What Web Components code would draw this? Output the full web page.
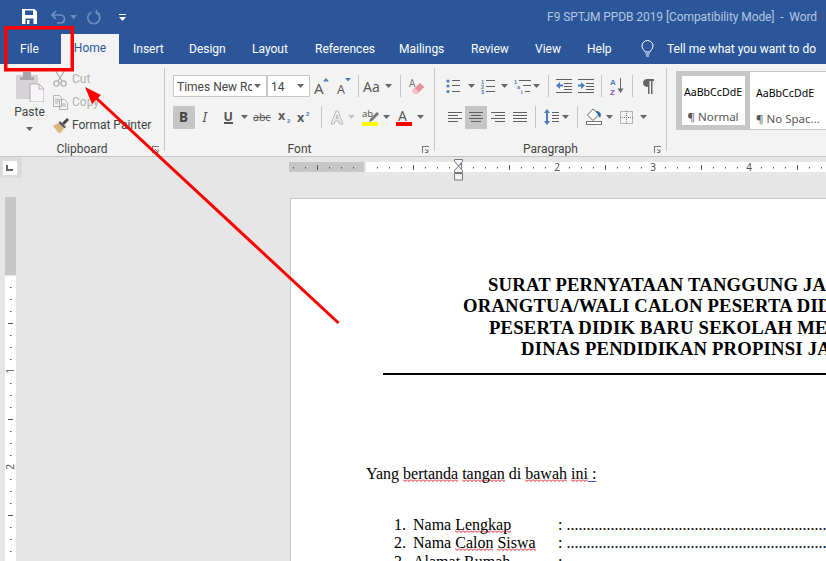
<!DOCTYPE html>
<html>
<head>
<meta charset="utf-8">
<title>Word</title>
<style>
  html, body { margin: 0; padding: 0; background: #e6e6e6; }
</style>
</head>
<body>
<word-window>
  <title-bar slot="top" caption="F9 SPTJM PPDB 2019 [Compatibility Mode]  -  Word"></title-bar>
  <ribbon-tabs slot="top"></ribbon-tabs>
  <word-ribbon slot="top">
    <ribbon-group label="Clipboard" w="165" launcher>
      <clip-board></clip-board>
    </ribbon-group>
    <ribbon-group label="Font" w="270" pad="8" launcher>
      <rb-row>
        <rb-select text="Times New Ro" w="94"></rb-select>
        <rb-select text="14" w="43"></rb-select>
        <rb-gap w="1"></rb-gap>
        <rb-btn icon="grow" w="22"></rb-btn>
        <rb-btn icon="shrink" w="21"></rb-btn>
        <rb-sep l="4" r="4"></rb-sep>
        <rb-btn icon="case" w="20"></rb-btn>
        <rb-btn icon="caret" w="10"></rb-btn>
        <rb-sep l="7" r="6"></rb-sep>
        <rb-btn icon="eraser" w="20"></rb-btn>
      </rb-row>
      <rb-row>
        <rb-btn icon="bold" w="22" active></rb-btn>
        <rb-btn icon="italic" w="22"></rb-btn>
        <rb-btn icon="underline" w="22"></rb-btn>
        <rb-btn icon="caret" w="10"></rb-btn>
        <rb-btn icon="strike" w="26"></rb-btn>
        <rb-btn icon="sub" w="19"></rb-btn>
        <rb-btn icon="sup" w="20"></rb-btn>
        <rb-sep l="7" r="6"></rb-sep>
        <rb-btn icon="effect" w="18"></rb-btn>
        <rb-btn icon="caretdim" w="10"></rb-btn>
        <rb-gap w="5"></rb-gap>
        <rb-btn icon="highlight" w="18"></rb-btn>
        <rb-btn icon="caret" w="14"></rb-btn>
        <rb-btn icon="fontcolor" w="22"></rb-btn>
        <rb-btn icon="caret" w="10"></rb-btn>
      </rb-row>
    </ribbon-group>
    <ribbon-group label="Paragraph" w="232" pad="9" launcher>
      <rb-row>
        <rb-btn icon="bullets" w="18"></rb-btn>
        <rb-btn icon="caret" w="18"></rb-btn>
        <rb-btn icon="numbers" w="16"></rb-btn>
        <rb-btn icon="caret" w="16"></rb-btn>
        <rb-gap w="2"></rb-gap>
        <rb-btn icon="multilevel" w="16"></rb-btn>
        <rb-btn icon="caret" w="12"></rb-btn>
        <rb-sep l="6" r="6"></rb-sep>
        <rb-btn icon="outdent" w="18"></rb-btn>
        <rb-gap w="4"></rb-gap>
        <rb-btn icon="indent" w="18"></rb-btn>
        <rb-sep l="6" r="6"></rb-sep>
        <rb-btn icon="sort" w="18"></rb-btn>
        <rb-sep l="6" r="6"></rb-sep>
        <rb-btn icon="pilcrow" w="18"></rb-btn>
      </rb-row>
      <rb-row>
        <rb-btn icon="alignleft" w="21"></rb-btn>
        <rb-btn icon="aligncenter" w="22" active></rb-btn>
        <rb-btn icon="alignright" w="22"></rb-btn>
        <rb-btn icon="justify" w="22"></rb-btn>
        <rb-sep l="4" r="6"></rb-sep>
        <rb-btn icon="spacing" w="18"></rb-btn>
        <rb-btn icon="caret" w="10"></rb-btn>
        <rb-sep l="7" r="6"></rb-sep>
        <rb-btn icon="shading" w="20"></rb-btn>
        <rb-btn icon="caret" w="10"></rb-btn>
        <rb-btn icon="borders" w="25"></rb-btn>
        <rb-btn icon="caret" w="8"></rb-btn>
      </rb-row>
    </ribbon-group>
    <style-gallery></style-gallery>
  </word-ribbon>
  <ruler-bar slot="top"></ruler-bar>
  <doc-area>
    <doc-page>
      <doc-heading indent="122">SURAT PERNYATAAN TANGGUNG JA</doc-heading>
      <doc-heading indent="97">ORANGTUA/WALI CALON PESERTA DID</doc-heading>
      <doc-heading indent="123">PESERTA DIDIK BARU SEKOLAH MEN</doc-heading>
      <doc-heading indent="155">DINAS PENDIDIKAN PROPINSI JA</doc-heading>
      <doc-rule></doc-rule>
      <doc-intro></doc-intro>
      <doc-item n="1." dots></doc-item>
      <doc-item n="2." dots></doc-item>
      <doc-item n="3."></doc-item>
    </doc-page>
  </doc-area>
  <red-callout slot="over"></red-callout>
</word-window>

<script>
const UI_FONT = 'Roboto, "Noto Sans", sans-serif';
const GRAY = '#5f5f5f';
const BLUE = '#4a7ebb';

const lines = (rows, color = GRAY) => rows.map(([x1, y, x2]) =>
  `<rect x="${x1}" y="${y}" width="${x2 - x1}" height="1" fill="${color}"/>`).join('');

const glyph = (w, h, body) =>
  `<svg xmlns="http://www.w3.org/2000/svg" width="${w}" height="${h}" viewBox="0 0 ${w} ${h}">${body}</svg>`;

const svgText = (x, y, size, fill, text, extra = '') =>
  `<text x="${x}" y="${y}" font-size="${size}" fill="${fill}" font-family='"Noto Sans", sans-serif' ${extra}>${text}</text>`;

// tiny digits inside the list icons
const tiny = (x, y, text, size = 5.5, fill = BLUE) =>
  `<text x="${x}" y="${y}" font-size="${size}" fill="${fill}" font-weight="700" font-family='"Liberation Sans", sans-serif'>${text}</text>`;

const ICONS = {
  caret: glyph(7, 4, `<path d="M0 0h7L3.5 4z" fill="#666"/>`),
  caretdim: glyph(7, 4, `<path d="M0 0h7L3.5 4z" fill="#c2c2c2"/>`),
  grow: glyph(16, 18, svgText(0, 17, 15, '#5a5a5a', 'A') + `<path d="M9 4.5L12 1l3 3.5z" fill="${BLUE}"/>`),
  shrink: glyph(14, 18, svgText(0, 17, 12.5, '#5a5a5a', 'A') + `<path d="M8 1h6l-3 3.5z" fill="${BLUE}"/>`),
  case: glyph(20, 14, svgText(0, 13, 14, '#5a5a5a', 'Aa')),
  eraser: glyph(16, 17, svgText(0, 9, 10, '#777', 'A') +
    `<path d="M3 12.5L11 5l4.5 4-7.5 7H5.5z" fill="#e98f9c"/><path d="M3 12.5L6 10l4 4-2 2H5.5z" fill="#f3c0c8"/>`),
  bold: glyph(12, 14, svgText(1, 12, 13.5, '#444', 'B', 'font-weight="700"')),
  italic: glyph(10, 14, svgText(1.5, 12, 13.5, '#555', 'I', 'font-style="italic"')),
  underline: glyph(11, 14, svgText(0.5, 10.5, 12.5, '#555', 'U', 'font-weight="700"') + lines([[1, 12, 10], [1, 13, 10]], '#555')),
  strike: glyph(18, 12, svgText(0, 10, 10.5, '#5a5a5a', 'abc') + lines([[0, 6, 18]], '#5a5a5a')),
  sub: glyph(14, 14, svgText(0, 10, 12.5, '#5a5a5a', 'x', 'font-weight="700"') + tiny(9, 13, '2', 6)),
  sup: glyph(14, 14, svgText(0, 12, 12.5, '#5a5a5a', 'x', 'font-weight="700"') + tiny(9, 6, '2', 6)),
  effect: glyph(14, 15, `<path d="M1 14L6 1h2l5 13h-3L9 11H5l-1 3zM5.8 8.6h2.4L7 5z" fill="#eee" stroke="#b8b8b8" stroke-width="1"/>`),
  highlight: glyph(17, 18, svgText(0, 9, 9.5, '#5a5a5a', 'ab') +
    `<path d="M8 11l7-7 2 2-7 7-3 1z" fill="#777"/><rect y="14" width="16" height="4" fill="#ffff00"/>`),
  fontcolor: glyph(16, 18, svgText(2, 12.5, 14, '#5a5a5a', 'A') + `<rect y="14" width="16" height="4" fill="#ff0000"/>`),
  bullets: glyph(14, 14, `<circle cx="2" cy="2" r="1.6" fill="${BLUE}"/><circle cx="2" cy="7" r="1.6" fill="${BLUE}"/><circle cx="2" cy="12.5" r="1.6" fill="${BLUE}"/>` +
    lines([[6, 1, 14], [6, 6, 14], [6, 12, 14]])),
  numbers: glyph(15, 15, tiny(0, 4.5, '1') + tiny(0, 10, '2') + tiny(0, 15, '3') +
    lines([[5, 1, 14], [5, 7, 14], [5, 12, 14]])),
  multilevel: glyph(17, 15, tiny(0, 4.5, '1') + tiny(3, 10, 'a') + tiny(7, 15, 'i') +
    lines([[5, 1, 17], [9, 6, 17], [11, 12, 16]])),
  outdent: glyph(16, 14, lines([[0, 0, 16], [8, 4, 16], [8, 7, 16], [8, 10, 16], [0, 13, 16]]) +
    `<path d="M0 6.5L4 3v2.5h3v2H4V10z" fill="${BLUE}"/>`),
  indent: glyph(16, 14, lines([[0, 0, 16], [8, 4, 16], [8, 7, 16], [8, 10, 16], [0, 13, 16]]) +
    `<path d="M7 6.5L3 3v2.5H0v2h3V10z" fill="${BLUE}"/>`),
  sort: glyph(14, 17, tiny(0, 7, 'A', 8, BLUE) + tiny(0, 16.5, 'Z', 8, '#8e4fb0') +
    `<path d="M10 0h1v12h-1z M7.5 10.5h6L10.5 15z" fill="#666"/>`),
  pilcrow: glyph(11, 15, `<path d="M4 0h7v2H9.5v13H8V2H6.5v13H5V8C2 8 0 6.5 0 4s2-4 4-4z" fill="#666"/>`),
  alignleft: glyph(14, 11, lines([[0, 0, 14], [0, 3, 10], [0, 6, 14], [0, 9, 10]])),
  aligncenter: glyph(14, 11, lines([[0, 0, 14], [2, 3, 12], [0, 6, 14], [2, 9, 12]])),
  alignright: glyph(14, 11, lines([[0, 0, 14], [4, 3, 14], [0, 6, 14], [4, 9, 14]])),
  justify: glyph(14, 11, lines([[0, 0, 14], [0, 3, 14], [0, 6, 14], [0, 9, 14]])),
  spacing: glyph(15, 16, `<path d="M3 0l3 4H4v8h2l-3 4-3-4h2V4H0z" fill="${BLUE}"/>` + lines([[8, 3, 15], [8, 6, 15], [8, 9, 15], [8, 12, 15]])),
  shading: glyph(17, 16, `<path d="M7 0l6 5.5-6 6-5.5-5.5z" fill="#fff" stroke="#666"/><path d="M10 2c3 0 5 2 5 4l-1 3-2-3z" fill="#2b6cb0"/>` +
    `<rect x="0.5" y="12.5" width="15" height="3" fill="#fff" stroke="#777"/>`),
  borders: glyph(13, 13, `<rect x="0.5" y="0.5" width="12" height="12" fill="none" stroke="#777" stroke-dasharray="1 1"/><path d="M6.5 0v13M0 6.5h13" stroke="#777" stroke-dasharray="1 1"/>`),
};

const launcher = glyph(7, 7, `<path d="M0 0h7v1H1v6H0z" fill="#777"/><path d="M3 3l3 3M6 3.5V6.5H3" fill="none" stroke="#777"/>`);

class WordWindow extends HTMLElement {
  constructor() {
    super();
    this.attachShadow({ mode: 'open' }).innerHTML = `
      <style>
        :host { display: flex; flex-direction: column; position: relative; width: 826px; height: 561px;
                overflow: hidden; background: #e6e6e6; font-family: ${UI_FONT}; }
      </style>
      <slot name="top"></slot>
      <slot></slot>
      <slot name="over"></slot>`;
  }
}

class TitleBar extends HTMLElement {
  connectedCallback() {
    this.attachShadow({ mode: 'open' }).innerHTML = `
      <style>
        :host { display: flex; align-items: center; height: 34px; background: #2b579a; padding: 0 9px 0 22px; }
        svg { display: block; }
        .qat { display: flex; align-items: center; }
        .cap { margin-left: auto; color: #b4c6e1; font-size: 12px; white-space: pre; letter-spacing: -0.08px; }
      </style>
      <div class="qat">
        <svg width="15" height="15" viewBox="0 0 15 15" style="margin-top:-1px"><path d="M0 0h12.5L15 2.5V15H0z" fill="#fff"/><path d="M3 1.5h8v4.5H3z" fill="#2b579a"/><path d="M3.5 9.5h8V15h-8z" fill="#2b579a"/><path d="M5 11h2.5v4H5z" fill="#fff"/></svg>
        <svg width="15" height="14" viewBox="0 0 15 14" style="margin-left:14px"><path d="M5 1L1 5l4 4M1.5 5H9c6 0 6 8 0 8H6" fill="none" stroke="#6e8dbd" stroke-width="1.7"/></svg>
        <svg width="7" height="4" viewBox="0 0 7 4" style="margin-left:4px"><path d="M0 0h7L3.5 4z" fill="#6e8dbd"/></svg>
        <svg width="15" height="15" viewBox="0 0 15 15" style="margin-left:9px"><path d="M5.5 2.2a6 6 0 1 0 5 .2M10.5 0v3.5H14" fill="none" stroke="#6e8dbd" stroke-width="1.7"/></svg>
        <svg width="7" height="7" viewBox="0 0 7 7" style="margin-left:18px"><path d="M0 0h7v1H0zM0 3h7L3.5 7z" fill="#fff"/></svg>
      </div>
      <div class="cap">${this.getAttribute('caption')}</div>`;
  }
}

class RibbonTabs extends HTMLElement {
  connectedCallback() {
    const tabs = [['Insert', 56], ['Design', 63], ['Layout', 63], ['References', 84], ['Mailings', 72], ['Review', 64], ['View', 52], ['Help', 54]];
    this.attachShadow({ mode: 'open' }).innerHTML = `
      <style>
        :host { display: flex; align-items: center; height: 30px; background: #2b579a; color: #fff; font-size: 12px; white-space: nowrap; }
        span { display: block; flex: none; margin-top: -1px; }
        .file { width: 41px; padding-left: 20px; }
        .home { width: 58px; height: 30px; line-height: 29px; text-align: center; background: #f3f3f3; color: #2b579a; margin: 0 14px 0 0; }
        svg { margin-right: 13px; display: block; flex: none; margin-top: -2px; }
      </style>
      <span class="file">File</span>
      <span class="home">Home</span>
      ${tabs.map(([t, w]) => `<span style="width:${w}px">${t}</span>`).join('')}
      <svg width="13" height="17" viewBox="0 0 13 17"><path d="M4 12C3.500 10 1 9 1 6a5.500 5.500 0 0 1 11 0c0 3-2.500 4-3 6z" fill="none" stroke="#fff"/><path d="M4.500 14h4M5 16h3" stroke="#fff"/></svg>
      <span>Tell me what you want to do</span>`;
  }
}

class WordRibbon extends HTMLElement {
  constructor() {
    super();
    this.attachShadow({ mode: 'open' }).innerHTML = `
      <style>
        :host { display: flex; height: 92px; background: #f3f3f3; border-bottom: 1px solid #c6c6c6; overflow: hidden; }
      </style>
      <slot></slot>`;
  }
}

class RibbonGroup extends HTMLElement {
  connectedCallback() {
    const w = this.getAttribute('w');
    const pad = this.getAttribute('pad');
    this.attachShadow({ mode: 'open' }).innerHTML = `
      <style>
        :host { display: flex; flex: none; width: ${w}px; box-sizing: border-box; height: 92px; padding: 4px 0 5px; }
        .in { flex: 1; display: flex; flex-direction: column; border-right: 1px solid #c6c6c6; padding-left: ${pad || 0}px; min-width: 0; }
        .body { flex: 1; min-height: 0; display: flex; flex-direction: column; gap: 9px; padding-top: ${pad ? 7 : 0}px; }
        .foot { display: grid; grid-template-columns: 1fr auto 1fr; align-items: center; height: 16px; font-size: 12px; color: #444;
                margin: 0 0 -6px ${pad ? -pad : 0}px; }
        .foot b { font-weight: 400; grid-column: 2; }
        .foot span { grid-column: 3; justify-self: end; margin-right: 5px; display: flex; }
      </style>
      <div class="in">
        <div class="body"><slot></slot></div>
        <div class="foot"><b>${this.getAttribute('label')}</b><span>${launcher}</span></div>
      </div>`;
  }
}

class RbRow extends HTMLElement {
  constructor() {
    super();
    this.attachShadow({ mode: 'open' }).innerHTML = `
      <style>:host { display: flex; align-items: center; height: 22px; }</style><slot></slot>`;
  }
}

class RbBtn extends HTMLElement {
  connectedCallback() {
    const active = this.hasAttribute('active');
    this.attachShadow({ mode: 'open' }).innerHTML = `
      <style>
        :host { display: flex; flex: none; align-items: center; justify-content: center; height: 23px;
                width: ${this.getAttribute('w')}px; background: ${active ? '#c6c6c6' : 'transparent'}; }
        svg { display: block; overflow: visible; }
      </style>
      ${ICONS[this.getAttribute('icon')]}`;
  }
}

class RbGap extends HTMLElement {
  connectedCallback() {
    this.attachShadow({ mode: 'open' }).innerHTML = `<style>:host { display: block; flex: none; width: ${this.getAttribute('w')}px; }</style>`;
  }
}

class RbSep extends HTMLElement {
  connectedCallback() {
    this.attachShadow({ mode: 'open' }).innerHTML = `
      <style>:host { display: block; flex: none; width: 1px; height: 22px; background: #c6c6c6;
        margin-left: ${this.getAttribute('l')}px; margin-right: ${this.getAttribute('r')}px; }</style>`;
  }
}

class RbSelect extends HTMLElement {
  connectedCallback() {
    this.attachShadow({ mode: 'open' }).innerHTML = `
      <style>
        :host { display: flex; flex: none; align-items: center; box-sizing: border-box; height: 22px; width: ${this.getAttribute('w')}px;
                background: #fff; border: 1px solid #c6c6c6; font-size: 12px; color: #444; padding: 0 5px 0 3px; white-space: nowrap; }
        span { flex: 1; min-width: 0; overflow: hidden; padding-top: 1px; }
        svg { display: block; flex: none; margin-left: 2px; }
      </style>
      <span>${this.getAttribute('text')}</span>${ICONS.caret}`;
  }
}

class ClipBoard extends HTMLElement {
  connectedCallback() {
    this.attachShadow({ mode: 'open' }).innerHTML = `
      <style>
        :host { display: flex; height: 69px; font-size: 12px; color: #444; white-space: nowrap; }
        svg { display: block; }
        .paste { width: 35px; margin-left: 12px; display: flex; flex-direction: column; align-items: center; padding-top: 4px; }
        .paste span { margin-top: 2px; line-height: 17px; }
        .paste svg:last-child { margin-top: 6px; }
        .small { margin: -0.5px 0 0 6px; display: flex; flex-direction: column; }
        .row { display: flex; align-items: center; height: 23px; }
        .row i { width: 19px; flex: none; display: flex; }
        .off { color: #b1b1b1; }
      </style>
      <div class="paste">
        <svg width="28" height="30" viewBox="0 0 28 30">
          <path d="M0 3h7V1h8v2h7v24H0z" fill="#d6d2d6"/>
          <path d="M7 0h8v5h3v3H4V5h3z" fill="#a9a5a9"/>
          <path d="M14 12h9l5 5v13H14z" fill="#f7f5f8" stroke="#b1adb1"/>
          <path d="M23 12v5h5" fill="none" stroke="#b1adb1"/>
        </svg>
        <span>Paste</span>
        ${ICONS.caret}
      </div>
      <div class="small">
        <div class="row off"><i><svg width="14" height="16" viewBox="0 0 14 16"><path d="M2.500 0L9 10M11.500 0L5 10" stroke="#b1b1b1" fill="none" stroke-width="1.300"/><circle cx="3.500" cy="12.500" r="2.600" fill="none" stroke="#b1b1b1" stroke-width="1.300"/><circle cx="10.500" cy="12.500" r="2.600" fill="none" stroke="#b1b1b1" stroke-width="1.300"/></svg></i>Cut</div>
        <div class="row off"><i><svg width="15" height="15" viewBox="0 0 15 15"><path d="M.5.5h6l2 2v9h-8zM6.500 4.500h5l3 3v7h-8z" fill="#f3f3f3" stroke="#b1b1b1"/><path d="M2 4h4M2 6h4M2 8h3M8 9h5M8 11h5" stroke="#b1b1b1"/></svg></i>Copy</div>
        <div class="row"><i><svg width="16" height="15" viewBox="0 0 16 15"><path d="M9 5l5-5 2 2-5 5z" fill="#444"/><path d="M7 3l6 6-2 1.500L5.500 5z" fill="#555"/><path d="M0 8l5.500-3L11 10l-3.500 5-3-1-2-3z" fill="#dcb67a"/></svg></i>Format Painter</div>
      </div>`;
  }
}

class StyleGallery extends HTMLElement {
  connectedCallback() {
    this.attachShadow({ mode: 'open' }).innerHTML = `
      <style>
        :host { display: flex; flex: none; box-sizing: border-box; margin: 7px 0 0 9px; height: 59px; width: 150px;
                background: #fff; border: solid #c6c6c6; border-width: 1px 0 1px 1px; }
        .st { box-sizing: border-box; flex: none; display: flex; flex-direction: column; overflow: hidden; color: #000; white-space: nowrap; }
        .st.sel { width: 73px; border: 5px solid #c6c6c6; margin: -1px 0; height: 59px; padding: 9px 0 0 2px; }
        .st.oth { width: 77px; padding: 14px 0 0 6px; }
        .s { font-family: "Noto Sans", sans-serif; font-size: 10.6px; line-height: 15px; width: 59px; overflow: hidden; }
        .n { font-family: "Noto Sans", sans-serif; font-size: 11.5px; line-height: 16px; color: #555; margin-top: 10px; }
        .sel .n { text-align: center; padding-right: 3px; }
      </style>
      <div class="st sel"><div class="s">AaBbCcDdE</div><div class="n">¶ Normal</div></div>
      <div class="st oth"><div class="s">AaBbCcDdE</div><div class="n">¶ No Spac...</div></div>`;
  }
}

class RulerBar extends HTMLElement {
  connectedCallback() {
    let marks = '';
    const zero = 76;
    for (let x = zero % 12; x < 537; x += 12) {
      const d = x - zero;
      if (d === 0) continue;
      if (d % 96 === 0 && d > 0) {
        marks += `<text x="${x}" y="14" font-size="10" text-anchor="middle" fill="#555" font-family='"Noto Sans", sans-serif'>${d / 96}</text>`;
      } else if (d % 48 === 0) {
        marks += `<rect x="${x}" y="8" width="1" height="5" fill="#555"/>`;
      } else {
        marks += `<rect x="${x}" y="10" width="1" height="1.500" fill="#555"/>`;
      }
    }
    this.attachShadow({ mode: 'open' }).innerHTML = `
      <style>
        :host { display: flex; height: 40px; flex: none; }
        .sel { width: 22px; height: 21px; background: #dcdcdc; display: flex; align-items: center; justify-content: center; box-sizing: border-box; padding: 0 3px 0 0; }
        .sel div { width: 14px; height: 14px; background: #fff; display: flex; align-items: center; justify-content: center; }
        svg { display: block; flex: none; }
        .r { margin-left: 267px; }
      </style>
      <div class="sel"><div><svg width="7" height="6" viewBox="0 0 7 6"><path d="M0 0h2v4h5v2H0z" fill="#666"/></svg></div></div>
      <svg class="r" width="537" height="26" viewBox="0 0 537 26">
        <rect y="5" width="75" height="10" fill="#c6c6c6"/>
        <rect x="77" y="5" width="460" height="10" fill="#fff"/>
        ${marks}
        <path d="M165.500 2.500h8v2l-4 4.500 4 4.500v2h-8v-2l4-4.500-4-4.500z" fill="#f3f3f3" stroke="#777"/>
        <path d="M165.500 16.500h8v6.500h-8z" fill="#f3f3f3" stroke="#777"/>
      </svg>`;
  }
}

class DocArea extends HTMLElement {
  connectedCallback() {
    let marks = '';
    const zero = 78;
    for (let y = zero + 12; y < 364; y += 12) {
      const d = y - zero;
      if (d % 96 === 0) {
        marks += `<text transform="translate(9 ${y}) rotate(-90)" font-size="10" text-anchor="middle" fill="#555" font-family='"Noto Sans", sans-serif'>${d / 96}</text>`;
      } else if (d % 48 === 0) {
        marks += `<rect x="3" y="${y}" width="5" height="1" fill="#555"/>`;
      } else {
        marks += `<rect x="5" y="${y}" width="1.500" height="1" fill="#555"/>`;
      }
    }
    this.attachShadow({ mode: 'open' }).innerHTML = `
      <style>
        :host { display: flex; flex: 1; min-height: 0; }
        svg { display: block; flex: none; margin-left: 5px; }
        .pg { flex: 1; display: flex; min-width: 0; padding: 1px 0 0 274px; }
      </style>
      <svg width="11" height="364" viewBox="0 0 11 364">
        <rect width="11" height="78" fill="#c6c6c6"/>
        <rect y="79" width="11" height="285" fill="#fff"/>
        ${marks}
      </svg>
      <div class="pg"><slot></slot></div>`;
  }
}

class DocPage extends HTMLElement {
  constructor() {
    super();
    this.attachShadow({ mode: 'open' }).innerHTML = `
      <style>
        :host { display: block; flex: 1; min-width: 0; box-sizing: border-box; background: #fff; overflow: hidden;
                border: solid #c6c6c6; border-width: 1px 0 0 1px; padding: 75px 0 0 75px;
                font-family: "Liberation Serif", serif; color: #000; white-space: nowrap; }
      </style>
      <slot></slot>`;
  }
}

class DocHeading extends HTMLElement {
  connectedCallback() {
    this.attachShadow({ mode: 'open' }).innerHTML = `
      <style>:host { display: block; padding-left: ${this.getAttribute('indent')}px; font-size: 18.67px; font-weight: 700; line-height: 21.4px; letter-spacing: 0.2px; }</style>
      <slot></slot>`;
  }
}

class DocRule extends HTMLElement {
  connectedCallback() {
    this.attachShadow({ mode: 'open' }).innerHTML = `
      <style>:host { display: block; height: 2px; background: #000; margin: 13px 0 0 17px; }</style>`;
  }
}

const WAVE = `url("data:image/svg+xml,%3Csvg xmlns='http://www.w3.org/2000/svg' width='4' height='3'%3E%3Cpath d='M0 .5L2 2.500L4 .5' fill='none' stroke='%23e81123'/%3E%3C/svg%3E")`;
const WAVY = `background: ${WAVE} 0 100% / 4px 3px repeat-x; text-decoration: none;`;

class DocIntro extends HTMLElement {
  connectedCallback() {
    this.attachShadow({ mode: 'open' }).innerHTML = `
      <style>
        :host { display: block; font-size: 16px; line-height: 18.4px; margin-top: 90px; }
        u { ${WAVY} }
        .b { text-decoration: underline #2b5fd0; text-underline-offset: 2px; }
      </style>
      Yang <u>bertanda</u> <u>tangan</u> di <u>bawah</u> <u>ini</u><span class="b"> :</span>`;
  }
}

class DocItem extends HTMLElement {
  connectedCallback() {
    const n = this.getAttribute('n');
    const label = { '1.': 'Nama <u>Lengkap</u>', '2.': 'Nama <u>Calon</u> <u>Siswa</u>', '3.': 'Alamat Rumah' }[n];
    const dots = this.hasAttribute('dots') ? ' ' + '.'.repeat(65) : '';
    this.attachShadow({ mode: 'open' }).innerHTML = `
      <style>
        :host { display: grid; grid-template-columns: 19px 145px 1fr; font-size: 16px; line-height: 18.4px; margin-left: 28px; }
        :host([n="1."]) { margin-top: 33px; }
        u { ${WAVY} }
        div { white-space: pre; overflow: hidden; }
      </style>
      <div>${n}</div><div>${label}</div><div>:${dots}</div>`;
  }
}

class RedCallout extends HTMLElement {
  constructor() {
    super();
    this.attachShadow({ mode: 'open' }).innerHTML = `
      <style>:host { position: absolute; inset: 0; pointer-events: none; } svg { display: block; }</style>
      <svg width="826" height="561" viewBox="0 0 826 561">
        <rect x="5.750" y="27.750" width="66.500" height="42" fill="none" stroke="#ff0000" stroke-width="3.500"/>
        <path d="M338.500 323L94 96" stroke="#ff0000" stroke-width="3" fill="none"/>
        <path d="M85 87L101 95L92 104z" fill="#ff0000"/>
      </svg>`;
  }
}

const defs = {
  'word-window': WordWindow, 'title-bar': TitleBar, 'ribbon-tabs': RibbonTabs, 'word-ribbon': WordRibbon,
  'ribbon-group': RibbonGroup, 'rb-row': RbRow, 'rb-btn': RbBtn, 'rb-gap': RbGap, 'rb-sep': RbSep, 'rb-select': RbSelect,
  'clip-board': ClipBoard, 'style-gallery': StyleGallery, 'ruler-bar': RulerBar, 'doc-area': DocArea, 'doc-page': DocPage,
  'doc-heading': DocHeading, 'doc-rule': DocRule, 'doc-intro': DocIntro, 'doc-item': DocItem, 'red-callout': RedCallout,
};
Object.entries(defs).forEach(([name, cls]) => customElements.define(name, cls));
</script>
</body>
</html>
